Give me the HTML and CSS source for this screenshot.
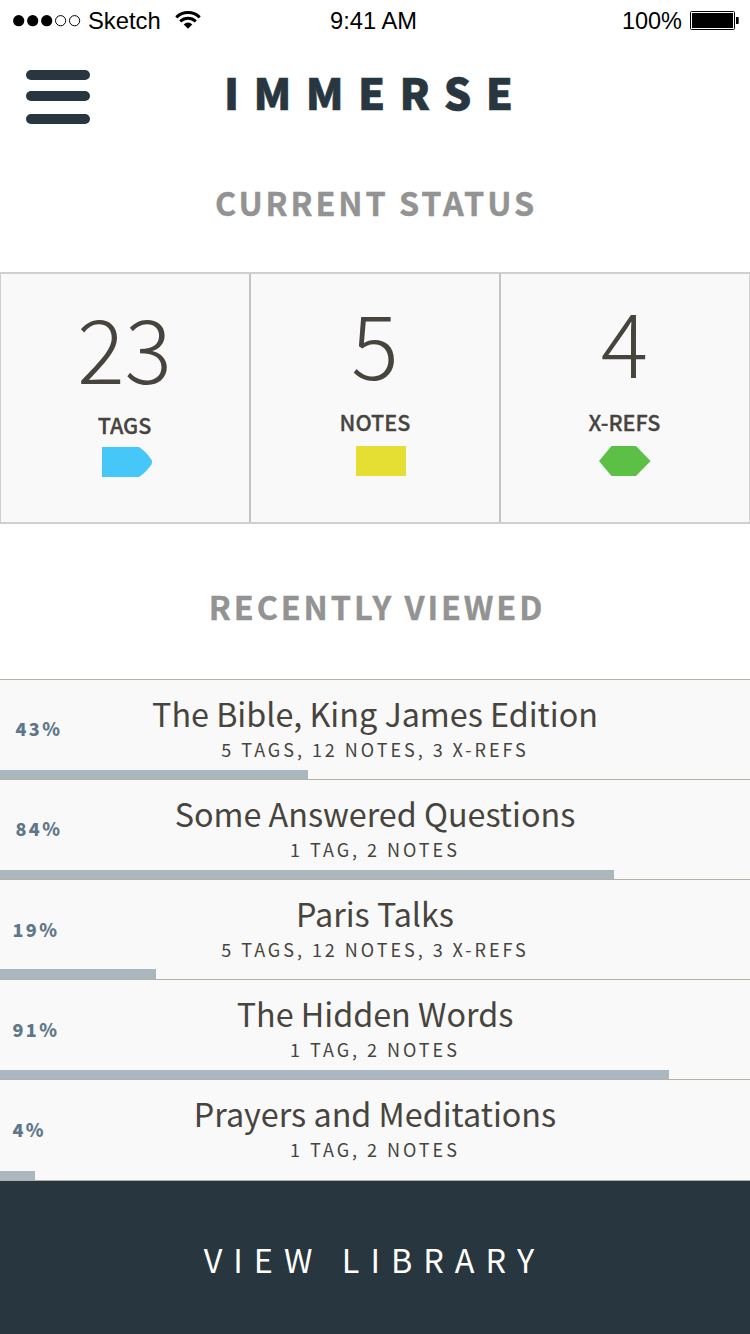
FILE: index.html
```html
<!DOCTYPE html>
<html lang="en"><head><meta charset="utf-8"><title>Immerse</title><link rel="stylesheet" href="styles.css"></head>
<body>
<header class="status">
  <div class="carrier">
    <svg class="dots" width="68" height="12" viewBox="0 0 68 12"><g fill="#000"><circle cx="5.700" cy="5.700" r="5.600"/><circle cx="19.700" cy="5.700" r="5.600"/><circle cx="33.700" cy="5.700" r="5.600"/></g><g fill="none" stroke="#000"><circle cx="47.600" cy="5.700" r="5.100"/><circle cx="61.600" cy="5.700" r="5.100"/></g></svg>
    <span>Sketch</span>
    <svg class="wifi" width="26" height="18" viewBox="0 0 26 18"><g fill="none" stroke="#000" stroke-width="3"><path d="M1.300 6.300Q6.300 1.600 13 1.600T24.700 6.300"/><path d="M5.200 10.300Q8.700 7.200 13 7.200T20.800 10.300"/></g><path d="M13 17.800L8.700 13.500Q10.600 11.500 13 11.500T17.300 13.500z"/></svg>
  </div>
  <div class="clock">9:41 AM</div>
  <div class="power"><span>100%</span><svg class="battery" width="49" height="19" viewBox="0 0 49 19"><rect x=".5" y=".5" width="44" height="18" rx="1" fill="none" stroke="#000"/><rect x="2" y="2" width="41" height="15"/><path d="M46 6h2q.7 0 .7.7v5.600q0 .7-.7.7H46z"/></svg></div>
</header>
<nav class="nav">
  <div class="menu"><i></i><i></i><i></i></div>
  <h1 class="brand">IMMERSE</h1>
</nav>
<h2 class="heading heading-status">CURRENT STATUS</h2>
<section class="stats">
  <div class="stat stat-tags"><b class="num">23</b><span class="label">TAGS</span><svg class="shape" width="50" height="30" viewBox="0 0 50 30"><path fill="#45c8f8" d="M0 0h37q8 5.500 12.500 12.800q1 2.200 0 4.400q-4.500 7.300-12.500 12.800H0z"/></svg></div>
  <div class="stat stat-notes"><b class="num">5</b><span class="label">NOTES</span><svg class="shape" width="50" height="30" viewBox="0 0 50 30"><path fill="#e6df33" d="M0 0h50v30H0z"/></svg></div>
  <div class="stat stat-refs"><b class="num">4</b><span class="label">X-REFS</span><svg class="shape" width="52" height="30" viewBox="0 0 52 30"><path fill="#5cbf46" d="M0 15L12.500 0h24.500l14.500 15l-14.500 15H12.500z"/></svg></div>
</section>
<h2 class="heading heading-recent">RECENTLY VIEWED</h2>
<ul class="books">
  <li class="book"><span class="pct">43%</span><span class="title">The Bible, King James Edition</span><span class="meta">5 TAGS, 12 NOTES, 3 X-REFS</span><span class="bar" style="width:308px"></span></li>
  <li class="book"><span class="pct">84%</span><span class="title">Some Answered Questions</span><span class="meta">1 TAG, 2 NOTES</span><span class="bar" style="width:614px"></span></li>
  <li class="book shift tall"><span class="pct">19%</span><span class="title">Paris Talks</span><span class="meta">5 TAGS, 12 NOTES, 3 X-REFS</span><span class="bar" style="width:156px"></span></li>
  <li class="book shift"><span class="pct">91%</span><span class="title">The Hidden Words</span><span class="meta">1 TAG, 2 NOTES</span><span class="bar" style="width:669px"></span></li>
  <li class="book shift last"><span class="pct">4%</span><span class="title">Prayers and Meditations</span><span class="meta">1 TAG, 2 NOTES</span><span class="bar" style="width:35px"></span></li>
</ul>
<footer class="library">VIEW LIBRARY</footer>
</body></html>
```
FILE: styles.css
```css
* { box-sizing: border-box; }
body { margin: 0; width: 750px; height: 1334px; overflow: hidden; background: #fff; color: #47443e; font-family: "Noto Sans CJK SC", sans-serif; display: flex; flex-direction: column; }
body > * { flex: none; }
.status { height: 40px; display: grid; grid-template-columns: 317px 1fr 317px; align-items: center; color: #000; font: 23.8px/40px "Liberation Sans", sans-serif; padding: 1px 11px 0 13px; }
.carrier { display: flex; align-items: center; gap: 7px; }
.wifi { margin: 0 0 2px 7px; }
.clock { font-size: 23.7px; white-space: nowrap; }
.power { display: flex; align-items: center; justify-content: flex-end; gap: 8px; font-size: 23.5px; }
.battery { margin-bottom: 1px; }
.nav { height: 100px; display: grid; grid-template-columns: 90px 1fr; }
.menu { padding: 30px 0 0 26px; display: flex; flex-direction: column; }
.menu i { width: 64px; height: 10px; border-radius: 5px; background: #283640; margin-bottom: 11px; }
.menu i:nth-child(2) { margin-bottom: 13px; }
.brand { margin: 0; padding-left: 134px; font-weight: 900; font-size: 43.2px; line-height: 102px; letter-spacing: 14.35px; color: #283640; -webkit-text-stroke: .6px; }
.heading { margin: 0; text-align: center; color: #939393; font-size: 32.4px; font-weight: 700; letter-spacing: 2.9px; line-height: 40px; -webkit-text-stroke: .4px; }
.heading-status { height: 132px; padding: 42px 0 0 2px; }
.stats { height: 252px; display: grid; grid-template-columns: 251px 250px 249px; background: #f9f9f9; border: 2px solid #cfcfcf; border-width: 2px 0; box-shadow: inset 1px 0 #cfcfcf, inset -1px 0 #cfcfcf; }
.stat { display: flex; flex-direction: column; align-items: center; }
.stat-tags, .stat-notes { border-right: 2px solid #c4c4c4; }
.num { font-weight: 300; font-size: 88.5px; line-height: 98px; margin-top: 18px; }
.label { font-weight: 500; font-size: 21.6px; line-height: 30px; margin: 17px 0 9px; -webkit-text-stroke: .3px; }
.stat-tags .num { margin-top: 22px; }
.stat-tags .label { margin: 16px 0 7px; }
.stat-tags .shape { margin-left: 5px; }
.stat-notes .shape { margin-left: 12px; }
.stat-refs { padding-right: 2px; }
.stat-refs .num { margin-top: 16px; }
.stat-refs .label { margin-top: 19px; }
.heading-recent { height: 155px; padding: 62px 0 0 4px; }
.books { margin: 0; padding: 0; list-style: none; }
.book { height: 100px; display: grid; grid-template: 56px 34px 9px / 100px 550px 100px; border-top: 1px solid #b5b2a5; background: #f9f9f9; text-align: center; }
.pct { grid-area: 1 / 1 / 3 / 2; text-align: left; padding-left: 15.5px; font-size: 18px; line-height: 96px; font-weight: 900; letter-spacing: 2.4px; color: #5f7889; }
.title { grid-area: 1 / 2; padding-top: 10px; font-size: 32.3px; line-height: 46px; }
.meta { grid-area: 2 / 2; line-height: 26px; font-size: 18px; letter-spacing: 2.97px; }
.bar { grid-area: 3 / 1 / 4 / 4; background: #aab7bf; }
.shift .pct { padding-left: 12.5px; line-height: 98px; }
.tall { grid-template-rows: 56px 33px 10px; }
.last { height: 102px; grid-template-rows: 56px 35px 9px; border-bottom: 1px solid #b5b2a5; }
.library { height: 153px; background: #283640; color: #fffef9; text-align: center; font-size: 32.4px; letter-spacing: 11.05px; line-height: 156px; padding-right: 1px; }
```
